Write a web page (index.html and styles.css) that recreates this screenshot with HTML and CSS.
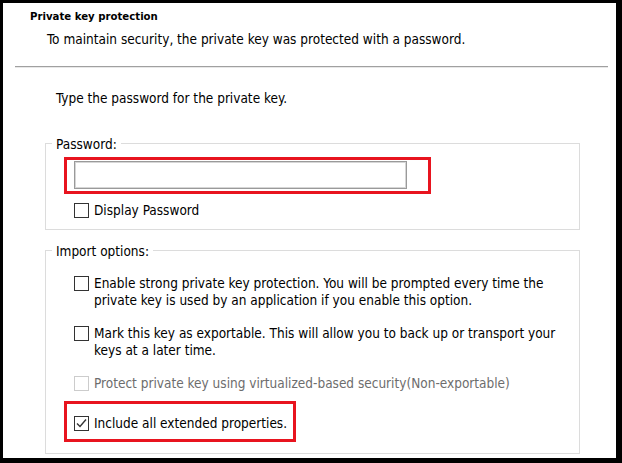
FILE: index.html
```html
<!DOCTYPE html>
<html lang="en">
<head>
<meta charset="utf-8">
<title>Private key protection</title>
<link rel="stylesheet" href="styles.css">
</head>
<body>
<div class="frame">
  <div class="title">Private key protection</div>
  <div class="subtitle">To maintain security, the private key was protected with a password.</div>
  <div class="sep"></div>
  <p class="prompt">Type the password for the private key.</p>

  <fieldset class="group group-pass">
    <legend>Password:</legend>
    <div class="hl hl-input"><input type="password" class="pw" aria-label="Password"></div>
    <div class="opt opt-display">
      <span class="cb"></span><span class="opt-text">Display Password</span>
    </div>
  </fieldset>

  <fieldset class="group group-import">
    <legend>Import options:</legend>
    <div class="opt opt-first">
      <span class="cb"></span><span class="opt-text">Enable strong private key protection. You will be prompted every time the<br>private key is used by an application if you enable this option.</span>
    </div>
    <div class="opt opt-next">
      <span class="cb"></span><span class="opt-text">Mark this key as exportable. This will allow you to back up or transport your<br>keys at a later time.</span>
    </div>
    <div class="opt opt-next opt-disabled">
      <span class="cb"></span><span class="opt-text">Protect private key using virtualized-based security(Non-exportable)</span>
    </div>
    <div class="hl hl-check">
      <div class="opt opt-inner">
        <span class="cb cb-checked"><svg width="13" height="13" viewBox="0 0 13 13"><polyline points="2,6.5 5,9.5 11,2.5" fill="none" stroke="#333" stroke-width="1.4"/></svg></span><span class="opt-text">Include all extended properties.</span>
      </div>
    </div>
  </fieldset>
</div>
</body>
</html>
```

FILE: styles.css
```css
html, body {
  margin: 0;
  padding: 0;
}
body {
  background: #000;
  width: 622px;
  height: 463px;
  overflow: hidden;
  font-family: "DejaVu Sans Condensed", "DejaVu Sans", sans-serif;
  font-stretch: condensed;
  font-size: 13.5px;
  line-height: 17px;
  color: #000;
}
.frame {
  margin: 3px 0 0 3px;
  width: 613px;
  height: 455px;
  background: #fff;
  padding-top: 5px;
  box-sizing: border-box;
  overflow: hidden;
}
.title {
  margin-left: 27px;
  font-weight: bold;
  font-size: 11.3px;
}
.subtitle {
  margin: 6px 0 0 44px;
}
.sep {
  margin: 18px 0 0 12px;
  width: 593px;
  border-top: 1px solid #a0a0a0;
  border-bottom: 1px solid #e8e8e8;
}
.prompt {
  margin: 22px 0 0 53px;
}
.group {
  margin: 0 0 0 42px;
  width: 535px;
  box-sizing: border-box;
  border: 1px solid #dcdcdc;
  padding: 0;
  min-width: 0;
}
.group legend {
  margin-left: 6px;
  padding: 2px 4px 0;
  line-height: 17px;
}
.group-pass {
  margin-top: 27px;
  padding-bottom: 10px;
}
.group-import {
  margin-top: 11px;
  padding-bottom: 11px;
}
.hl {
  border: 3px solid #e8141f;
  box-sizing: border-box;
  margin-left: 18px;
}
.hl-input {
  margin-top: 4px;
  width: 367px;
  padding: 1px 21px 2px 7px;
}
.pw {
  display: block;
  width: 333px;
  height: 28px;
  box-sizing: border-box;
  margin: 0;
  padding: 0 4px;
  border: 1px solid #9a9a9a;
  box-shadow: inset 0 0 0 1px #d6d6d6;
  background: #fff;
  outline: none;
}
.opt {
  display: flex;
  align-items: flex-start;
  margin-left: 28px;
  white-space: nowrap;
}
.opt-display {
  margin-top: 8px;
}
.opt-first {
  margin-top: 15px;
}
.opt-next {
  margin-top: 16px;
}
.cb {
  flex: none;
  width: 15px;
  height: 15px;
  box-sizing: border-box;
  border: 1px solid #333;
  margin: 1px 5px 0 0;
  background: #fff;
  display: flex;
  align-items: center;
  justify-content: center;
}
.opt-disabled {
  color: #6d6d6d;
}
.opt-disabled .cb {
  border-color: #cccccc;
}
.hl-check {
  margin-top: 9px;
  width: 232px;
  padding: 11px 0 7px 7px;
}
.opt-inner {
  margin-left: 0;
}
```
